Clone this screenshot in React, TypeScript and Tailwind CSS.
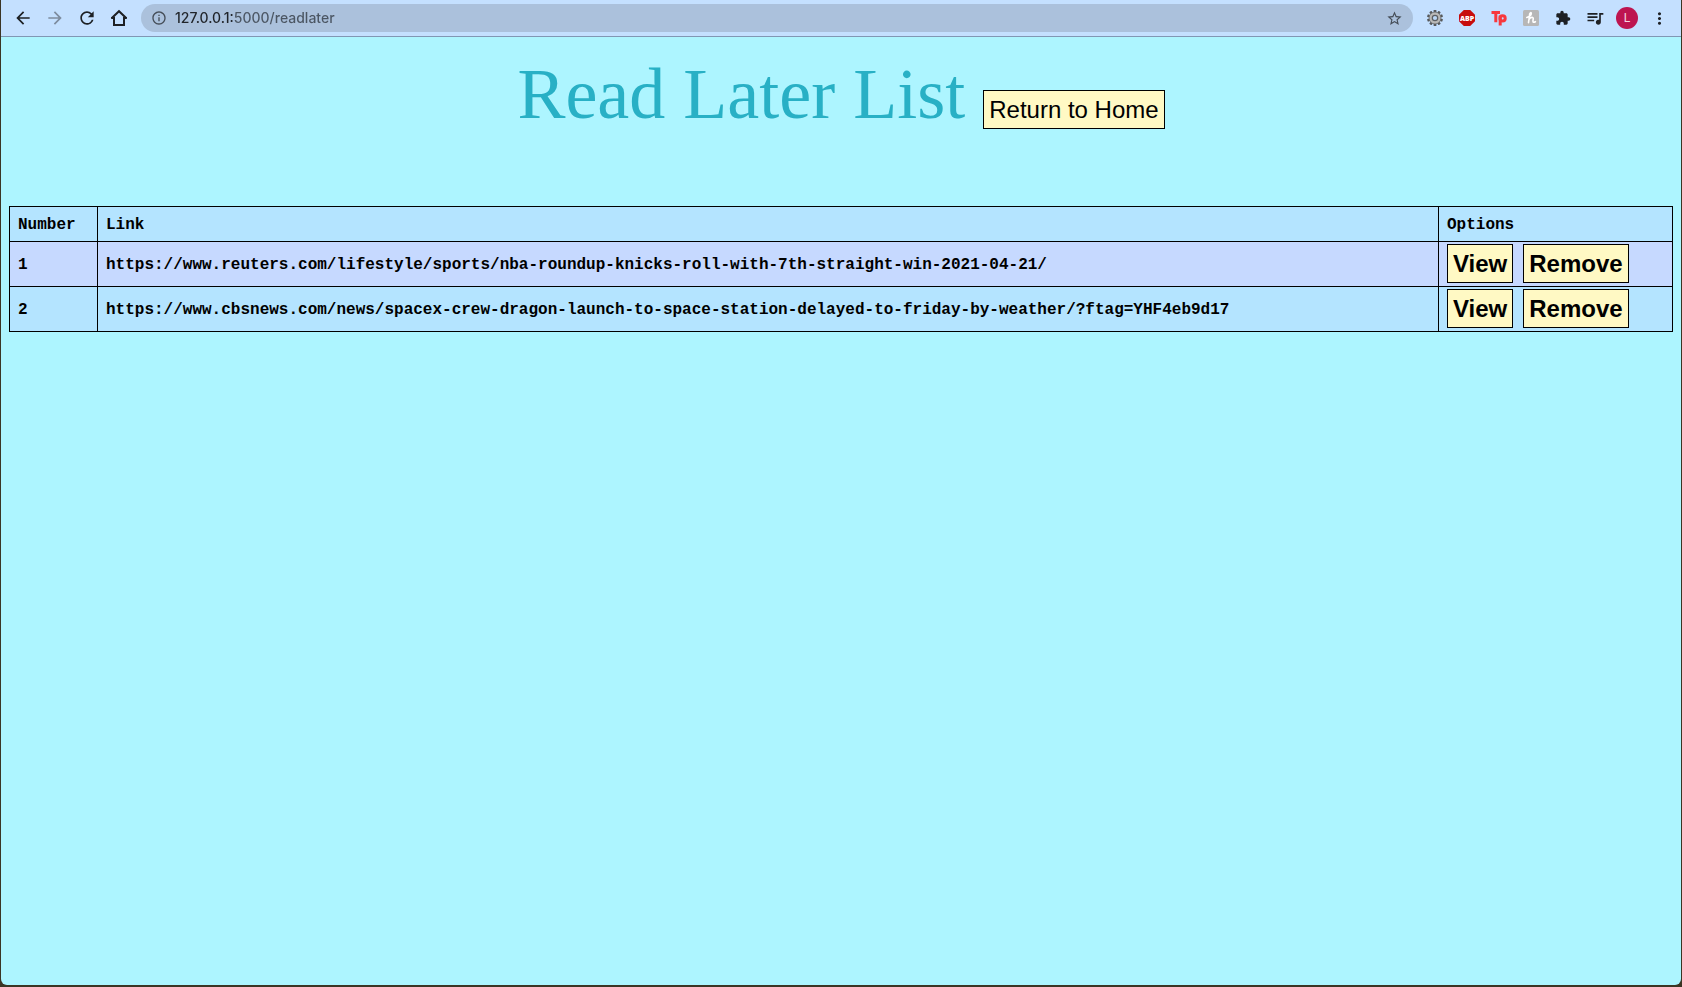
import React from "react";
import {
  MdArrowBack,
  MdArrowForward,
  MdExtension,
  MdInfoOutline,
  MdMoreVert,
  MdQueueMusic,
  MdRefresh,
  MdStarBorder,
} from "react-icons/md";

const links = [
  "https://www.reuters.com/lifestyle/sports/nba-roundup-knicks-roll-with-7th-straight-win-2021-04-21/",
  "https://www.cbsnews.com/news/spacex-crew-dragon-launch-to-space-station-delayed-to-friday-by-weather/?ftag=YHF4eb9d17",
];

function ToolButton({ label, children }: { label: string; children: React.ReactNode }) {
  return (
    <button
      type="button"
      aria-label={label}
      className="flex h-7 w-8 shrink-0 items-center justify-center text-[#1d2024]"
    >
      {children}
    </button>
  );
}

function HomeIcon() {
  return (
    <svg width="18" height="18" viewBox="0 0 18 18" fill="none" stroke="currentColor" strokeWidth="2">
      <path d="M1.6 9.3 9 2.2l7.4 7.1" />
      <path d="M1.2 9H4v7h10V9h2.8" />
    </svg>
  );
}

function GearIcon() {
  const teeth = [0, 36, 72, 108, 144, 180, 216, 252, 288, 324];
  return (
    <svg width="16" height="16" viewBox="0 0 16 16">
      <g fill="#55585a">
        {teeth.map((a) => (
          <rect key={a} x="6.6" y="0" width="2.8" height="3" rx="0.6" transform={`rotate(${a} 8 8)`} />
        ))}
      </g>
      <circle cx="8" cy="8" r="5.9" fill="#b9b9b7" stroke="#66696b" strokeWidth="0.7" />
      <circle cx="8" cy="8" r="2.7" fill="#b9d6f5" stroke="#5d6063" strokeWidth="1.2" />
    </svg>
  );
}

function AbpIcon() {
  return (
    <svg width="16" height="16" viewBox="0 0 16 16">
      <path d="M4.8 0h6.4L16 4.8v6.4L11.2 16H4.8L0 11.2V4.8z" fill="#c70d0d" />
      <text
        x="8"
        y="10.6"
        textAnchor="middle"
        fontFamily="Open Sans, sans-serif"
        fontWeight="800"
        fontSize="7"
        fill="#fff"
      >
        ABP
      </text>
    </svg>
  );
}

function TpIcon() {
  return (
    <svg width="16" height="16" viewBox="0 0 16 16" fill="none" stroke="#f8383d" strokeWidth="3">
      <path d="M.5 2.5H9M4.8 2.5v9.8" />
      <path d="M9.2 5.5v10" />
      <circle cx="11.6" cy="8.4" r="2.6" />
    </svg>
  );
}

function HoneyIcon() {
  return (
    <svg width="16" height="16" viewBox="0 0 16 16">
      <rect width="16" height="16" rx="1.5" fill="#b7b7b7" />
      <path
        d="M3.8 7.4C6.2 6.6 8.3 4.8 8.3 3.5 8.3 2.2 7 2.4 6.7 4L5.5 12.7M5.9 9.5C7.4 7 10.7 6.6 10.2 9c-.5 2.3-.5 4.4 2.2 2.7"
        fill="none"
        stroke="#fff"
        strokeWidth="1.6"
        strokeLinecap="round"
      />
    </svg>
  );
}

function BrowserBar() {
  return (
    <header className="flex h-[37px] items-center border-b border-[#8197b4] bg-[#c4e0ff] px-1.5">
      <nav aria-label="Browser" className="flex">
        <ToolButton label="Back">
          <MdArrowBack size={20} />
        </ToolButton>
        <button
          type="button"
          aria-label="Forward"
          className="flex h-7 w-8 items-center justify-center text-[#7d8c9f]"
        >
          <MdArrowForward size={20} />
        </button>
        <ToolButton label="Reload">
          <MdRefresh size={20} />
        </ToolButton>
        <ToolButton label="Home">
          <HomeIcon />
        </ToolButton>
      </nav>
      <div className="mx-1.5 flex h-7 min-w-0 flex-1 items-center rounded-full bg-[#abc1dc] px-2.5">
        <MdInfoOutline size={16} className="shrink-0 text-[#454d57]" />
        <input
          aria-label="Address"
          type="text"
          defaultValue="127.0.0.1:5000/readlater"
          className="ml-2 min-w-0 flex-1 bg-[linear-gradient(90deg,#202429_60px,#4b5663_60px)] bg-clip-text font-['Inter',sans-serif] text-sm font-medium text-transparent outline-none"
        />
        <button type="button" aria-label="Bookmark" className="text-[#454d57]">
          <MdStarBorder size={17} />
        </button>
      </div>
      <div className="flex">
        <ToolButton label="Settings extension">
          <GearIcon />
        </ToolButton>
        <ToolButton label="Ad blocker">
          <AbpIcon />
        </ToolButton>
        <ToolButton label="Tp extension">
          <TpIcon />
        </ToolButton>
        <ToolButton label="Honey">
          <HoneyIcon />
        </ToolButton>
        <ToolButton label="Extensions">
          <MdExtension size={16} />
        </ToolButton>
        <ToolButton label="Media">
          <MdQueueMusic size={20} />
        </ToolButton>
        <ToolButton label="Profile">
          <span className="flex size-[22px] items-center justify-center rounded-full bg-[#bd1550] font-['Roboto',sans-serif] text-xs text-[#f6d5e0]">
            L
          </span>
        </ToolButton>
        <ToolButton label="Menu">
          <MdMoreVert size={19} />
        </ToolButton>
      </div>
    </header>
  );
}

function ActionButton({ children }: { children: React.ReactNode }) {
  return (
    <button
      type="button"
      className="border border-black bg-[#fff9c4] p-[5px] font-['Liberation_Sans',Arial,sans-serif] text-2xl leading-[27px] text-black"
    >
      {children}
    </button>
  );
}

export default function App() {
  return (
    <div className="flex min-h-screen flex-col bg-[#3b3524] px-px pb-0.5">
      <BrowserBar />
      <main className="flex-1 rounded-b-md bg-[#adf5ff] px-2 pt-4">
        <div className="flex items-baseline justify-center gap-[18px]">
          <h1 className="font-['Liberation_Serif',serif] text-7xl leading-[83px] text-[#28b0c5]">
            Read Later List
          </h1>
          <ActionButton>Return to Home</ActionButton>
        </div>
        <table className="mt-[70px] w-full border-collapse border border-black text-left font-['Liberation_Mono',monospace] text-base leading-[18px] font-bold text-black">
          <thead>
            <tr className="h-[35px] bg-[#b4e4ff]">
              <th scope="col" className="w-[88px] border border-black px-2 pt-0.5">
                Number
              </th>
              <th scope="col" className="border border-black px-2 pt-0.5">
                Link
              </th>
              <th scope="col" className="w-[234px] border border-black px-2 pt-0.5">
                Options
              </th>
            </tr>
          </thead>
          <tbody>
            {links.map((link, i) => (
              <tr key={link} className="h-[45px] odd:bg-[#c6d9ff] even:bg-[#b4e4ff]">
                <td className="border border-black px-2 pt-0.5">{i + 1}</td>
                <td className="border border-black px-2 pt-0.5">{link}</td>
                <td className="border border-black px-2 pt-0.5 pb-[3px]">
                  <div className="flex gap-2.5">
                    <ActionButton>View</ActionButton>
                    <ActionButton>Remove</ActionButton>
                  </div>
                </td>
              </tr>
            ))}
          </tbody>
        </table>
      </main>
    </div>
  );
}
